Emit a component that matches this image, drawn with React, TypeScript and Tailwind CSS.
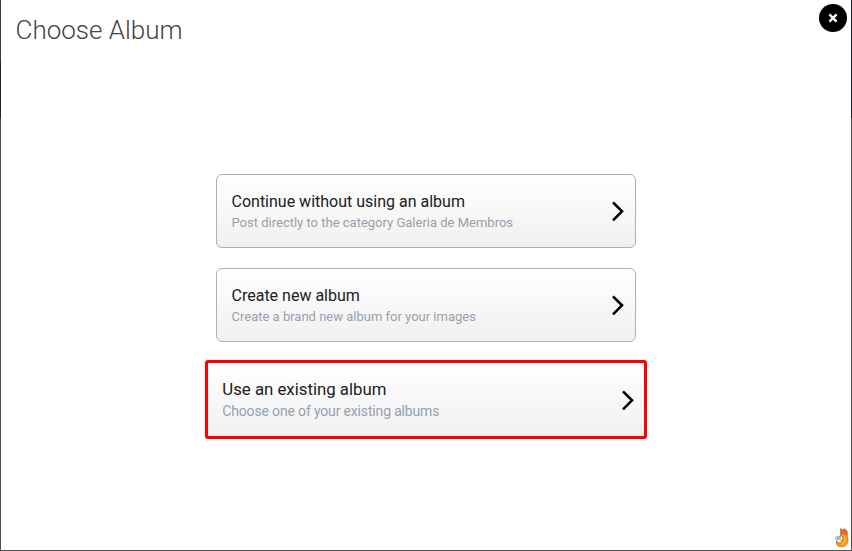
type CardProps = { title: string; detail: string; highlighted?: boolean };

function AlbumOption({ title, detail, highlighted = false }: CardProps) {
  return (
    <button
      className={
        highlighted
          ? "mt-[18px] flex h-[79px] w-[442px] items-center justify-between rounded-[3px] border-3 border-[#ff0000] bg-linear-to-b from-white to-[#f0f0f0] pr-[9px] pl-[14.3px] text-left"
          : "mb-5 flex h-[74px] w-[420px] items-center justify-between rounded-md border border-[#b0b0b0] bg-linear-to-b from-white to-[#f0f0f0] pr-[10px] pl-[14.5px] text-left last:mb-0"
      }
    >
      <span className="flex flex-col pt-[2px]">
        <span className={highlighted ? "-mt-px mb-px text-[16.8px] leading-[22px] text-[#202020]" : "text-base leading-[22px] text-[#202020]"}>
          {title}
        </span>
        <span className={highlighted ? "text-[14px] leading-[21px] tracking-[-0.16px] text-[#95a1ad]" : "text-[13px] leading-5 text-[#95a1ad]"}>
          {detail}
        </span>
      </span>
      <svg width="14" height="22" viewBox="0 0 14 22" fill="none" stroke="#000" strokeWidth="2.6" className="shrink-0">
        <path d="M2 2.3 L11 11.3 L2 20.3" />
      </svg>
    </button>
  );
}

function Mascot() {
  return (
    <svg width="14" height="20" viewBox="0 0 14 20">
      <path d="M5.5 6V.5L8 2l2-1.5V2l2 .3.5 5L10 9 6 7Z" fill="#e5662a" stroke="#b54f1b" strokeWidth="0.5" />
      <path d="M6 5.8c4-1.2 7 1.2 7 6 0 4-2.5 7-6.5 7-3.8 0-6-3-5-6 1 2 4 3 5 1l1-3-3-2Z" fill="#f99b18" stroke="#b8650c" strokeWidth="0.7" />
      <path d="M9.5 8.5c2 3 .5 6-2.5 8" fill="none" stroke="#ffbf2b" strokeWidth="1.3" />
      <ellipse cx="6.3" cy="10.3" rx="1.3" ry="2.4" fill="#fff" stroke="#666" strokeWidth="0.6" />
      <ellipse cx="2.4" cy="10.2" rx="1.9" ry="1.8" fill="#eef7ff" stroke="#8798a8" strokeWidth="0.8" />
      <path d="M3 9.7v1.3" stroke="#243d68" strokeWidth="1.2" />
    </svg>
  );
}

export default function App() {
  return (
    <div className="flex h-[551px] w-[852px] flex-col bg-[#505050] font-['Roboto',sans-serif]">
      <div className="flex h-[550px]">
        <div className="flex w-px flex-col">
          <div className="h-[62px] bg-[#393a35]" />
          <div className="h-14 bg-[#19243a]" />
        </div>
        <div className="flex w-[850px] flex-col bg-white">
          <header className="flex h-[60px] items-start justify-between pt-1 pr-1 pl-[14.5px]">
            <h1 className="pt-[9px] text-[26px] leading-[34px] font-light text-[#444]">Choose Album</h1>
            <button aria-label="Close" className="flex size-7 items-center justify-center rounded-full bg-black">
              <svg width="10" height="10" viewBox="0 0 10 10" fill="none" stroke="white" strokeWidth="2.4">
                <path d="m1.4 1.4 7.2 7.2m0-7.2L1.4 8.6" />
              </svg>
            </button>
          </header>
          <main className="flex flex-col items-center pt-[114px]">
            <div className="flex flex-col">
              <AlbumOption title="Continue without using an album" detail="Post directly to the category Galeria de Membros" />
              <AlbumOption title="Create new album" detail="Create a brand new album for your images" />
            </div>
            <AlbumOption title="Use an existing album" detail="Choose one of your existing albums" highlighted />
          </main>
          <footer className="mt-auto flex justify-end pr-[2px] pb-[2px]">
            <Mascot />
          </footer>
        </div>
        <div className="flex w-px flex-col">
          <div className="h-[118px] bg-[#18222b]" />
        </div>
      </div>
    </div>
  );
}
